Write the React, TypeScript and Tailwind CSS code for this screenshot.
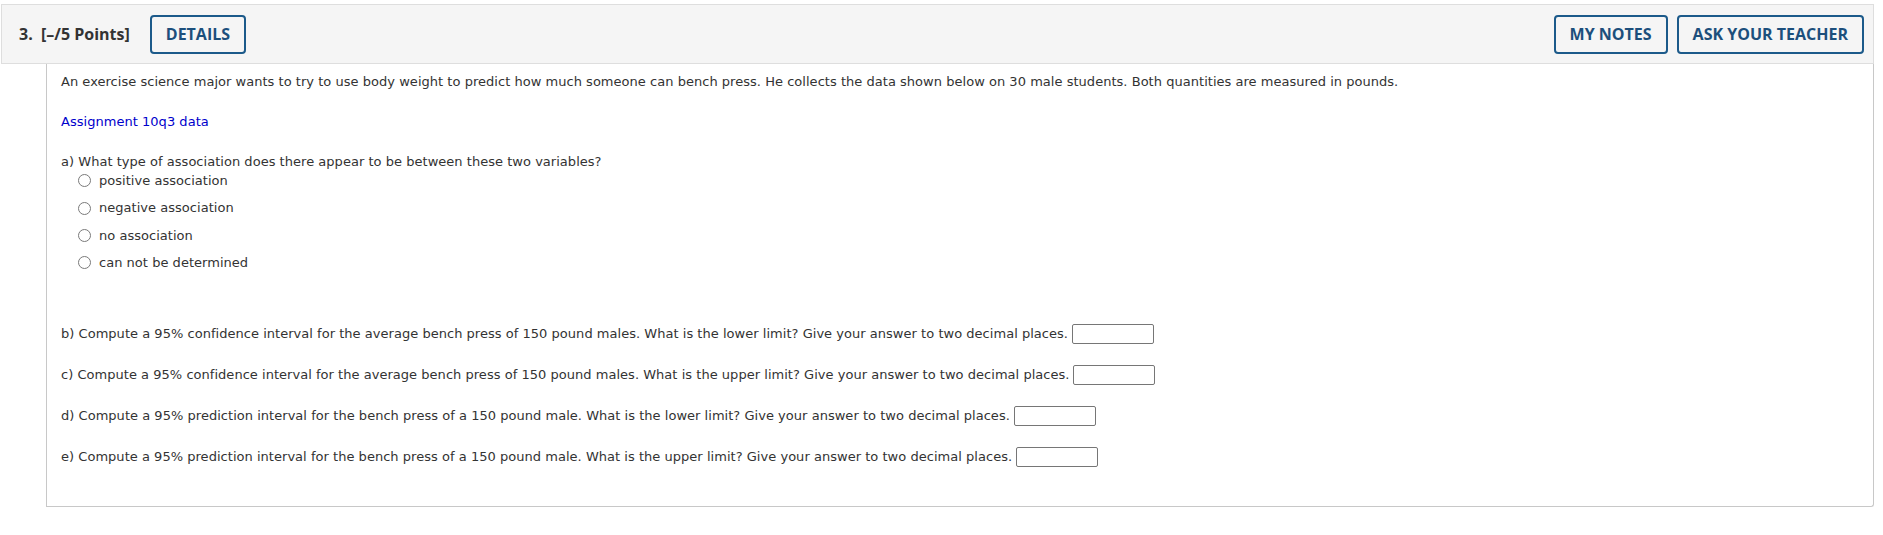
import React from 'react';

const options = [
  'positive association',
  'negative association',
  'no association',
  'can not be determined',
];

const parts = [
  {
    label: 'b) Compute a 95% confidence interval for the average bench press of 150 pound males. What is the lower limit? Give your answer to two decimal places.',
  },
  {
    label: 'c) Compute a 95% confidence interval for the average bench press of 150 pound males. What is the upper limit? Give your answer to two decimal places.',
  },
  {
    label: 'd) Compute a 95% prediction interval for the bench press of a 150 pound male. What is the lower limit? Give your answer to two decimal places.',
  },
  {
    label: 'e) Compute a 95% prediction interval for the bench press of a 150 pound male. What is the upper limit? Give your answer to two decimal places.',
  },
];

function OutlineButton({ children }: { children: React.ReactNode }) {
  return (
    <button className="h-[39px] px-[14px] border-2 border-[#1c5a8a] rounded-[4px] text-[16px] font-bold text-[#1c4f7c] bg-transparent leading-none">
      {children}
    </button>
  );
}

export default function App() {
  return (
    <div className="w-[1883px] h-[535px] bg-white pt-[4px] pl-[1px] pr-[9px]">
      {/* Question header */}
      <div
        className="h-[60px] flex items-center justify-between bg-[#f5f5f5] border border-[#dedede] pl-[17px] pr-[9px]"
        style={{ fontFamily: '"Open Sans", sans-serif' }}
      >
        <div className="flex items-center">
          <span className="text-[16px] font-bold text-[#333] mr-[20px]">3.&nbsp; [–/5 Points]</span>
          <OutlineButton>DETAILS</OutlineButton>
        </div>
        <div className="flex items-center gap-[9px]">
          <OutlineButton>MY NOTES</OutlineButton>
          <OutlineButton>ASK YOUR TEACHER</OutlineButton>
        </div>
      </div>

      {/* Question body */}
      <div className="ml-[45px] h-[443px] border-l border-r border-b border-[#c8c8c8] rounded-br-[3px] pl-[14px] pt-[8px] text-[13px] tracking-[0.03px] text-[#333]" style={{ fontFamily: '"DejaVu Sans", Verdana, sans-serif' }}>
        <p className="h-[20px] leading-[20px]">
          An exercise science major wants to try to use body weight to predict how much someone can bench press. He collects the data shown below on 30 male students. Both quantities are measured in pounds.
        </p>
        <p className="h-[20px] leading-[20px] mt-[20px] text-[#0000cc]">Assignment 10q3 data</p>
        <p className="h-[20px] leading-[20px] mt-[20px]">a) What type of association does there appear to be between these two variables?</p>
        <div className="pl-[17px] -mt-[5px]">
          {options.map((o) => (
            <div key={o} className="flex items-center h-[27.4px]">
              <span className="w-[13px] h-[13px] rounded-full border border-[#7a7a7a] bg-white mr-[8px]" />
              <span>{o}</span>
            </div>
          ))}
        </div>
        <div className="mt-[47px] flex flex-col gap-[21px]">
          {parts.map((p) => (
            <div key={p.label} className="flex items-center h-[20px]">
              <span>{p.label}</span>
              <span className="ml-[4px] w-[82px] h-[20px] border border-[#767676] rounded-[2px] bg-white" />
            </div>
          ))}
        </div>
      </div>
    </div>
  );
}
